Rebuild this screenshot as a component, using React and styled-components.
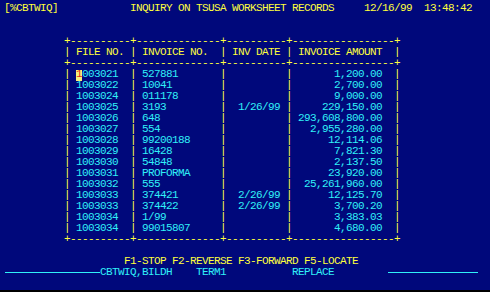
import React from "react";
import styled, { createGlobalStyle } from "styled-components";

const CW = 6; // one terminal column, px

const GlobalStyle = createGlobalStyle`
  html, body {
    margin: 0;
    padding: 0;
    background: #000;
  }
`;

const Screen = styled.div`
  width: 490px;
  height: 291px;
  box-sizing: border-box;
  padding: 3px 0 0 4px;
  background: #00087b;
  border-bottom: 1px solid #000;
  font-family: "Liberation Mono", "DejaVu Sans Mono", monospace;
  font-size: 11px;
  letter-spacing: -0.6px;
  color: #ffff3c;
  overflow: hidden;
`;

const Line = styled.div`
  display: flex;
  height: 11px;
  line-height: 11px;
  white-space: pre;
`;

const Cell = styled.span`
  display: inline-block;
  position: relative;
  box-sizing: border-box;
  width: ${(p) => p.$w * CW}px;
  padding: 0 ${(p) => (p.$pr || 0) * CW}px 0 ${(p) => (p.$pl || 0) * CW}px;
  text-align: ${(p) => p.$align || "left"};
  color: ${(p) => (p.$cyan ? "#30f0f8" : "#ffff3c")};
`;

/* block cursor sits under the first character of the field */
const CursorCell = styled(Cell)`
  &::before {
    content: "";
    position: absolute;
    left: ${(p) => (p.$pl || 0) * CW}px;
    top: 1px;
    width: ${CW}px;
    height: 11px;
    background: #f6ef7c;
  }
`;

const CursorChar = styled.span`
  position: relative;
  color: #e02818;
`;

const FieldRule = styled.span`
  display: inline-block;
  width: ${(p) => p.$w * CW}px;
  height: 11px;
  position: relative;
  &::after {
    content: "";
    position: absolute;
    left: ${(p) => p.$inset || 0}px;
    right: ${(p) => p.$trim || 0}px;
    top: 5px;
    height: 1px;
    background: #30f0f8;
  }
`;

const cols = [
  { w: 10, pl: 1 },
  { w: 14, pl: 1 },
  { w: 10, pr: 1, align: "right" },
  { w: 17, pr: 2, align: "right" },
];

const records = [
  ["1003021", "527881", "", "1,200.00"],
  ["1003022", "10041", "", "2,700.00"],
  ["1003024", "011178", "", "9,000.00"],
  ["1003025", "3193", "1/26/99", "229,150.00"],
  ["1003026", "648", "", "293,608,800.00"],
  ["1003027", "554", "", "2,955,280.00"],
  ["1003028", "99200188", "", "12,114.06"],
  ["1003029", "16428", "", "7,821.30"],
  ["1003030", "54848", "", "2,137.50"],
  ["1003031", "PROFORMA", "", "23,920.00"],
  ["1003032", "555", "", "25,261,960.00"],
  ["1003033", "374421", "2/26/99", "12,125.70"],
  ["1003033", "374422", "2/26/99", "3,700.20"],
  ["1003034", "1/99", "", "3,383.03"],
  ["1003034", "99015807", "", "4,680.00"],
];

const headings = ["FILE NO.", "INVOICE NO.", "INV DATE", "INVOICE AMOUNT"];

function Border() {
  return (
    <Line>
      <Cell $w={10} />
      <Cell $w={1}>+</Cell>
      {cols.map((c, i) => (
        <React.Fragment key={i}>
          <Cell $w={c.w}>{"-".repeat(c.w)}</Cell>
          <Cell $w={1}>+</Cell>
        </React.Fragment>
      ))}
    </Line>
  );
}

function Heading() {
  return (
    <Line>
      <Cell $w={10} />
      <Cell $w={1}>|</Cell>
      {cols.map((c, i) => (
        <React.Fragment key={i}>
          <Cell $w={c.w} $pl={1}>
            {headings[i]}
          </Cell>
          <Cell $w={1}>|</Cell>
        </React.Fragment>
      ))}
    </Line>
  );
}

function Record({ values, withCursor }) {
  return (
    <Line>
      <Cell $w={10} />
      <Cell $w={1}>|</Cell>
      {cols.map((c, i) => {
        const Field = withCursor && i === 0 ? CursorCell : Cell;
        const v = values[i];
        return (
          <React.Fragment key={i}>
            <Field $w={c.w} $pl={c.pl} $pr={c.pr} $align={c.align} $cyan>
              {Field === CursorCell ? (
                <>
                  <CursorChar>{v[0]}</CursorChar>
                  {v.slice(1)}
                </>
              ) : (
                v
              )}
            </Field>
            <Cell $w={1}>|</Cell>
          </React.Fragment>
        );
      })}
    </Line>
  );
}

export default function App() {
  return (
    <>
      <GlobalStyle />
      <Screen>
        <Line>
          <Cell $w={21}>[%CBTWIQ]</Cell>
          <Cell $w={39}>INQUIRY ON TSUSA WORKSHEET RECORDS</Cell>
          <Cell $w={10}>12/16/99</Cell>
          <Cell $w={8}>13:48:42</Cell>
        </Line>
        <Line />
        <Line />
        <Border />
        <Heading />
        <Border />
        {records.map((r, i) => (
          <Record key={i} values={r} withCursor={i === 0} />
        ))}
        <Border />
        <Line />
        <Line>
          <Cell $w={20} />
          <Cell $w={39}>F1-STOP F2-REVERSE F3-FORWARD F5-LOCATE</Cell>
        </Line>
        <Line>
          <FieldRule $w={16} $inset={1} />
          <Cell $w={16} $cyan>CBTWIQ,BILDH</Cell>
          <Cell $w={16} $cyan>TERM1</Cell>
          <Cell $w={16} $cyan>REPLACE</Cell>
          <FieldRule $w={16} $trim={6} />
        </Line>
      </Screen>
    </>
  );
}
